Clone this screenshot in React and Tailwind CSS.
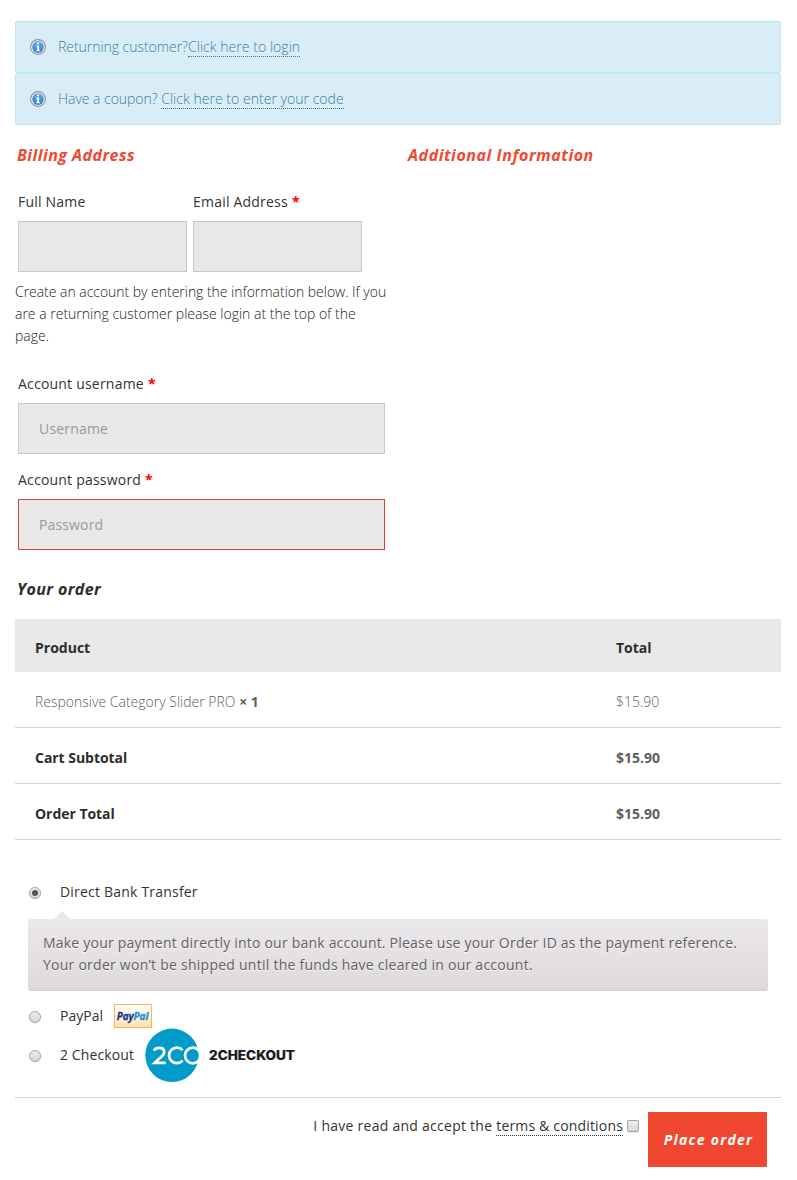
import React from "react";

function InfoIcon() {
  return (
    <svg className="h-4 w-4 shrink-0" viewBox="0 0 16 16">
      <defs>
        <linearGradient id="info" x1="0" y1="0" x2="0" y2="1">
          <stop offset="0" stopColor="#6aaee8" />
          <stop offset="1" stopColor="#2b7fcf" />
        </linearGradient>
      </defs>
      <circle cx="8" cy="8" r="7.4" fill="#fff" stroke="#8b8b8b" strokeWidth="1.1" />
      <circle cx="8" cy="8" r="5.9" fill="url(#info)" />
      <path d="M7 3.6h2v1.7H7zM6.2 6.6h2.9v4.6h1v1H6.1v-1h1V7.6h-.9z" fill="#fff" />
    </svg>
  );
}

function Notice({ children }) {
  return (
    <div className="flex h-[52px] items-center rounded-xs border border-[#bce8f1] bg-[#d9edf7] pl-3.5 text-[#2f7ca3] font-light [text-shadow:0_1px_0_rgba(255,255,255,0.5)]">
      <InfoIcon />
      <p className="ml-3 tracking-[-0.04px] whitespace-pre">{children}</p>
    </div>
  );
}

function DottedLink({ children, className = "" }) {
  return (
    <a href="#" className={`inline-block h-5 border-b border-dotted leading-[19px] ${className}`}>
      {children}
    </a>
  );
}

function Label({ children, required, className = "" }) {
  return (
    <label className={`block h-[22px] leading-[22px] tracking-[0.21px] text-[#333] ${className}`}>
      {children}
      {required && <b className="ml-1 text-[#f00]">*</b>}
    </label>
  );
}

function Row({ name, price, first }) {
  return (
    <div className="flex h-14 items-center border-b border-[#d3d3d3] pt-1 pl-5">
      <div className={first ? "w-[581px] font-light text-[#5e5e5e]" : "w-[581px] font-bold tracking-[-0.04px] text-[#2d2d2d]"}>{name}</div>
      <div className={first ? "font-light text-[#5e5e5e]" : "font-bold text-[#5e5e5e]"}>{price}</div>
    </div>
  );
}

function Radio({ checked }) {
  return (
    <svg className="mt-px h-[14px] w-[14px] shrink-0" viewBox="0 0 14 14">
      <defs>
        <linearGradient id="radio" x1="0" y1="0" x2="0" y2="1">
          <stop offset="0" stopColor="#ededed" />
          <stop offset="1" stopColor="#d6d6d6" />
        </linearGradient>
      </defs>
      <circle cx="7" cy="7.5" r="6" fill="#d9d9d9" opacity=".6" />
      <circle cx="7" cy="7" r="5.5" fill="url(#radio)" stroke="#a5a5a5" />
      {checked && <circle cx="7" cy="7" r="3" fill="#555" />}
    </svg>
  );
}

function PayPalBadge() {
  return (
    <svg className="ml-[11px] h-6 w-[38px]" viewBox="0 0 38 24">
      <defs>
        <linearGradient id="pp" x1="0" y1="0" x2="0" y2="1">
          <stop offset="0" stopColor="#fff" />
          <stop offset="0.4" stopColor="#fff5df" />
          <stop offset="1" stopColor="#ffe0aa" />
        </linearGradient>
      </defs>
      <rect x=".5" y=".5" width="37" height="23" fill="url(#pp)" stroke="#f9b266" />
      <g fontFamily="Open Sans, sans-serif" fontWeight="700" fontStyle="italic" fontSize="10">
        <text x="2.700" y="15.500" fill="#12388a" stroke="#12388a" strokeWidth=".3" textLength="17" lengthAdjust="spacingAndGlyphs">Pay</text>
        <text x="19.500" y="15.500" fill="#2790d4" stroke="#2790d4" strokeWidth=".3" textLength="15" lengthAdjust="spacingAndGlyphs">Pal</text>
      </g>
    </svg>
  );
}

function TwoCheckoutLogo() {
  return (
    <svg className="ml-[11px] h-[54px] w-[151px]" viewBox="0 0 151 54">
      <defs>
        <clipPath id="disc">
          <rect x="0" y="0" width="54" height="54" />
        </clipPath>
      </defs>
      <circle cx="27" cy="27.3" r="26.7" fill="#009bc9" />
      <g fill="none" stroke="#fff" strokeWidth="2.700" clipPath="url(#disc)" transform="translate(0 .5)">
        <path d="M8.800 22C10.200 20 12 19.300 14.200 19.300c3.200 0 5 1.600 5 4.100 0 1.900-.9 3.300-3.400 5.400l-6.200 5.600h11.200" />
        <path d="M37.600 21.600a7.800 7.800 0 1 0 0 10.600" />
        <circle cx="47.800" cy="27" r="7.800" />
      </g>
      <text x="64" y="32" fontFamily="Inter, sans-serif" fontWeight="800" fontSize="12.500" fill="#1a1a1a" stroke="#1a1a1a" strokeWidth=".2" textLength="86" lengthAdjust="spacingAndGlyphs">2CHECKOUT</text>
    </svg>
  );
}

export default function App() {
  return (
    <main className="h-[1180px] w-[797px] bg-white pt-[21px] pr-4 pl-[15px] font-['Open_Sans',sans-serif] text-[14px] leading-[22px] text-[#333]">
      <Notice>
        Returning customer?<DottedLink className="tracking-[0.04px]">Click here to login</DottedLink>
      </Notice>
      <Notice>
        {"Have a coupon? "}
        <DottedLink className="tracking-[0.03px]">Click here to enter your code</DottedLink>
      </Notice>

      <section className="flex h-[447px]">
        <div className="w-[393px] pt-[19px]">
          <h3 className="ml-0.5 h-[22px] text-[16px] font-bold tracking-[0.45px] text-[#f04830] italic">Billing Address</h3>
          <div className="mt-[25px] ml-[3px] flex gap-1.5">
            <div className="w-[169px]">
              <Label>Full Name</Label>
              <input className="mt-2 block h-[51px] w-full border border-[#c8c8c8] bg-[#e8e8e8]" />
            </div>
            <div className="w-[169px]">
              <Label required>Email Address</Label>
              <input className="mt-2 block h-[51px] w-full border border-[#c8c8c8] bg-[#e8e8e8]" />
            </div>
          </div>
          <p className="mt-[9px] font-light text-[#222]">
            <span className="tracking-[-0.03px]">Create an account by entering the information below. If you</span>
            <br />
            are a returning customer please login at the top of the
            <br />
            page.
          </p>
          <div className="mt-[26px] ml-[3px] w-[367px]">
            <Label required>Account username</Label>
            <input placeholder="Username" className="mt-2 block h-[51px] w-full border border-[#c8c8c8] bg-[#e8e8e8] px-5 tracking-[0.18px] placeholder:text-[#999]" />
            <Label required className="mt-[15px]">Account password</Label>
            <input placeholder="Password" className="mt-2 block h-[51px] w-full border border-[#e03c38] bg-[#e8e8e8] px-5 tracking-[0.14px] placeholder:text-[#999]" />
          </div>
        </div>
        <div className="pt-[19px]">
          <h3 className="h-[22px] text-[16px] font-bold tracking-[0.55px] text-[#f04830] italic">Additional Information</h3>
        </div>
      </section>

      <h3 className="ml-0.5 h-[47px] pt-1.5 text-[16px] font-bold tracking-[0.4px] text-[#2d2d2d] italic">Your order</h3>
      <div className="flex h-[53px] items-center bg-[#e8e8e8] pt-1 pl-5 font-bold text-[#2d2d2d]">
        <div className="w-[581px]">Product</div>
        <div>Total</div>
      </div>
      <Row first name={<>Responsive Category Slider PRO <b className="font-bold">× 1</b></>} price="$15.90" />
      <Row name="Cart Subtotal" price="$15.90" />
      <Row name="Order Total" price="$15.90" />

      <section className="h-[258px] border-b border-[#d3d3d3] pt-[41px] pl-[13px]">
        <div className="flex h-[22px] items-center">
          <Radio checked />
          <span className="ml-[18px] tracking-[0.2px]">Direct Bank Transfer</span>
        </div>
        <svg className="mt-2 ml-[26px] block h-2 w-4" viewBox="0 0 16 8">
          <path d="M0 8 8 0l8 8z" fill="#eae7ea" />
        </svg>
        <div className="h-[72px] w-[740px] rounded-[3px] bg-linear-to-b from-[#ebe8eb] to-[#dfd9dd] px-[15px] pt-[13px] tracking-[0.21px] whitespace-nowrap text-[#5f5f5f] shadow-[inset_0_-1px_1px_rgba(0,0,0,0.05)] [text-shadow:0_1px_0_rgba(255,255,255,0.8)]">
          Make your payment directly into our bank account. Please use your Order ID as the payment reference.
          <br />
          <span className="tracking-[0.25px]">Your order won’t be shipped until the funds have cleared in our account.</span>
        </div>
        <div className="mt-[13px] flex h-6 items-center">
          <Radio />
          <span className="ml-[18px]">PayPal</span>
          <PayPalBadge />
        </div>
        <div className="flex h-[54px] items-center">
          <Radio />
          <span className="ml-[18px] tracking-[0.1px]">2 Checkout</span>
          <TwoCheckoutLogo />
        </div>
      </section>

      <footer className="flex justify-end pt-3.5 pr-3.5">
        <div className="mt-1 flex h-5 whitespace-pre">
          <span className="leading-[19px] tracking-[0.26px]">I have read and accept the </span>
          <DottedLink className="tracking-[0.17px]">terms & conditions</DottedLink>
          <span className="mt-1 ml-1 h-3 w-3 rounded-[2px] border border-[#a3a3a3] bg-linear-to-b from-[#eee] to-[#d8d8d8] shadow-[0_1px_0_#e4e4e4]" />
        </div>
        <button className="ml-[9px] h-[55px] w-[119px] bg-[#f04830] pl-0.5 text-[14px] font-bold tracking-[1.3px] text-white italic">Place order</button>
      </footer>
    </main>
  );
}
